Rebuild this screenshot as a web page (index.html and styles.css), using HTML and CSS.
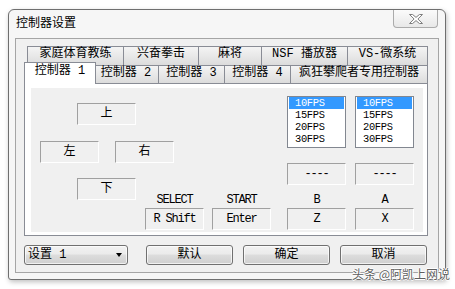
FILE: index.html
```html
<!DOCTYPE html>
<html lang="zh-CN">
<head>
    <meta charset="UTF-8">
    <meta name="viewport" content="width=device-width, initial-scale=1.0">
    <title>控制器设置</title>
    <link rel="stylesheet" href="styles.css">
</head>
<body>
    <div class="window">
        <!-- Заголовок вікна -->
        <div class="titlebar">
            <span class="title">控制器设置</span>
            <button class="close" title="关闭">
                <svg width="14" height="10" viewBox="0 0 14 10">
                    <polygon points="0.5,0.5 3.6,0.5 7,3.4 10.4,0.5 13.5,0.5 8.9,5 13.5,9.5 10.4,9.5 7,6.6 3.6,9.5 0.5,9.5 5.1,5" fill="#fff" stroke="#7d7d7d" stroke-width="1"/>
                </svg>
            </button>
        </div>

        <div class="client">
            <!-- Вкладки -->
            <div class="tabs">
                <div class="tab-row row-back">
                    <div class="tab">家庭体育教练</div>
                    <div class="tab">兴奋拳击</div>
                    <div class="tab">麻将</div>
                    <div class="tab">NSF 播放器</div>
                    <div class="tab">VS-微系统</div>
                </div>
                <div class="tab-row row-front">
                    <div class="tab active">控制器 1</div>
                    <div class="tab">控制器 2</div>
                    <div class="tab">控制器 3</div>
                    <div class="tab">控制器 4</div>
                    <div class="tab">疯狂攀爬者专用控制器</div>
                </div>
            </div>

            <div class="panel">
                <div class="page">
                    <div class="dpad">
                        <div class="dpad-row">
                            <div class="box shift">上</div>
                        </div>
                        <div class="dpad-row second">
                            <div class="box">左</div>
                            <div class="box gap">右</div>
                        </div>
                        <div class="dpad-row third">
                            <div class="box shift">下</div>
                            <div class="key first">
                                <span class="label">SELECT</span>
                                <div class="box en">R Shift</div>
                            </div>
                            <div class="key">
                                <span class="label">START</span>
                                <div class="box en">Enter</div>
                            </div>
                        </div>
                    </div>

                    <div class="pads">
                        <div class="pad-col">
                            <ul class="list">
                                <li class="selected">10FPS</li>
                                <li>15FPS</li>
                                <li>20FPS</li>
                                <li>30FPS</li>
                            </ul>
                            <div class="box en turbo">----</div>
                            <span class="label">B</span>
                            <div class="box en">Z</div>
                        </div>
                        <div class="pad-col">
                            <ul class="list">
                                <li class="selected">10FPS</li>
                                <li>15FPS</li>
                                <li>20FPS</li>
                                <li>30FPS</li>
                            </ul>
                            <div class="box en turbo">----</div>
                            <span class="label">A</span>
                            <div class="box en">X</div>
                        </div>
                    </div>
                </div>
            </div>

            <!-- Нижній ряд -->
            <div class="footer">
                <div class="combo">
                    <span>设置 1</span>
                    <span class="arrow"></span>
                </div>
                <button class="btn">默认</button>
                <button class="btn">确定</button>
                <button class="btn">取消</button>
            </div>
        </div>
    </div>

    <div class="watermark">头条 @阿凯上网说</div>
</body>
</html>
```

FILE: styles.css
```css
* {
    box-sizing: border-box;
}
body {
    margin: 0;
    padding: 9px 0 0 8px;
    width: 455px;
    height: 289px;
    overflow: hidden;
    position: relative;
    background: #fff;
    font-family: "Liberation Mono", "Noto Sans CJK SC", monospace;
    font-size: 12px;
    color: #000;
}
.window {
    width: 438px;
    height: 271px;
    border: 1px solid #6f6f6f;
    border-radius: 6px 6px 3px 3px;
    background: #f6f6f6;
    box-shadow: 1px 2px 5px rgba(0, 0, 0, 0.25);
    padding: 0 6px 6px;
    display: flex;
    flex-direction: column;
}
.titlebar {
    height: 28px;
    display: flex;
    justify-content: space-between;
    align-items: flex-start;
}
.title {
    padding-left: 1px;
    line-height: 27px;
    align-self: center;
}
.close {
    width: 45px;
    height: 18px;
    margin-right: 1px;
    padding: 0;
    border: 1px solid #ababab;
    border-top: none;
    border-radius: 0 0 4px 4px;
    background: linear-gradient(#fbfbfb, #e8e8e8);
    display: flex;
    align-items: center;
    justify-content: center;
}
.client {
    flex: 1;
    border: 1px solid #a5a5a5;
    background: #f0f0f0;
    padding: 7px 10px 0 8px;
}

/* вкладки */
.tab-row {
    display: grid;
    height: 19px;
}
.row-back {
    grid-template-columns: 97px 75px 63px 86px 80px;
    margin-left: 3px;
}
.row-front {
    grid-template-columns: 68px 65px 66px 66px 137px;
    margin-left: 2px;
    height: 18px;
}
.tab {
    border: 1px solid #898c95;
    border-left: none;
    border-bottom: none;
    background: linear-gradient(#f4f4f4, #dcdcdc);
    text-align: center;
    line-height: 15px;
    white-space: nowrap;
}
.tab:first-child {
    border-left: 1px solid #898c95;
}
.tab.active {
    margin: -3px -2px -1px -2px;
    position: relative;
    z-index: 1;
    background: #fff;
    line-height: 17px;
}
.panel {
    width: 404px;
    height: 153px;
    border: 1px solid #898c95;
    background: #fff;
    padding: 4px 4px 3px 6px;
}
.page {
    height: 100%;
    background: #f0f0f0;
    overflow: hidden;
    display: flex;
    align-items: flex-start;
}

/* кнопки джойстика */
.box {
    width: 59px;
    height: 22px;
    border: 1px solid;
    border-color: #a0a0a0 #fff #fff #a0a0a0;
    text-align: center;
    line-height: 20px;
    white-space: nowrap;
}
.en,
.label {
    letter-spacing: -1.2px;
}
.dpad {
    margin: 15px 0 0 9px;
}
.dpad-row {
    display: flex;
    align-items: flex-start;
}
.dpad-row.second {
    margin-top: 16px;
}
.dpad-row.third {
    margin-top: 15px;
}
.shift {
    margin-left: 37px;
}
.gap {
    margin-left: 16px;
}
.key {
    display: flex;
    flex-direction: column;
    margin: 16px 0 0 8px;
}
.key.first {
    margin-left: 9px;
}
.label {
    display: block;
    height: 12px;
    line-height: 12px;
    margin-bottom: 2px;
    text-align: center;
}
.pads {
    display: flex;
    gap: 9px;
    margin: 8px 0 0 16px;
}
.pad-col {
    width: 59px;
    display: flex;
    flex-direction: column;
}
.list {
    list-style: none;
    margin: 0;
    padding: 0;
    height: 52px;
    background: #fff;
    border: 1px solid #828790;
}
.list li {
    height: 12px;
    line-height: 12px;
    margin: 0 1px;
    padding-left: 6px;
    font-size: 10.4px;
    letter-spacing: -0.3px;
}
.list li.selected {
    background: #3399ff;
    color: #fff;
}
.turbo {
    margin: 15px 0 9px;
}

/* нижній ряд */
.footer {
    display: flex;
    align-items: center;
    margin-top: 9px;
    gap: 10px;
}
.combo,
.btn {
    height: 20px;
    border: 1px solid #707070;
    border-radius: 3px;
    background: linear-gradient(#f2f2f2 0%, #ebebeb 45%, #dddddd 50%, #cfcfcf 100%);
    box-shadow: inset 0 0 0 1px rgba(255, 255, 255, 0.7);
    font: inherit;
    color: #000;
}
.combo {
    width: 104px;
    margin-right: 8px;
    padding: 0 5px 0 3px;
    display: flex;
    align-items: center;
    justify-content: space-between;
    line-height: 18px;
}
.arrow {
    width: 0;
    height: 0;
    border-left: 3.5px solid transparent;
    border-right: 3.5px solid transparent;
    border-top: 4px solid #000;
}
.btn {
    width: 87px;
    padding: 0;
    line-height: 18px;
}
.watermark {
    position: absolute;
    left: 352px;
    top: 267px;
    font-family: "Noto Sans CJK SC", sans-serif;
    font-size: 12px;
    line-height: 14px;
    color: #5e5e5e;
    text-shadow: 1px 0 0 #fff, -1px 0 0 #fff, 0 1px 0 #fff, 0 -1px 0 #fff;
}
```
